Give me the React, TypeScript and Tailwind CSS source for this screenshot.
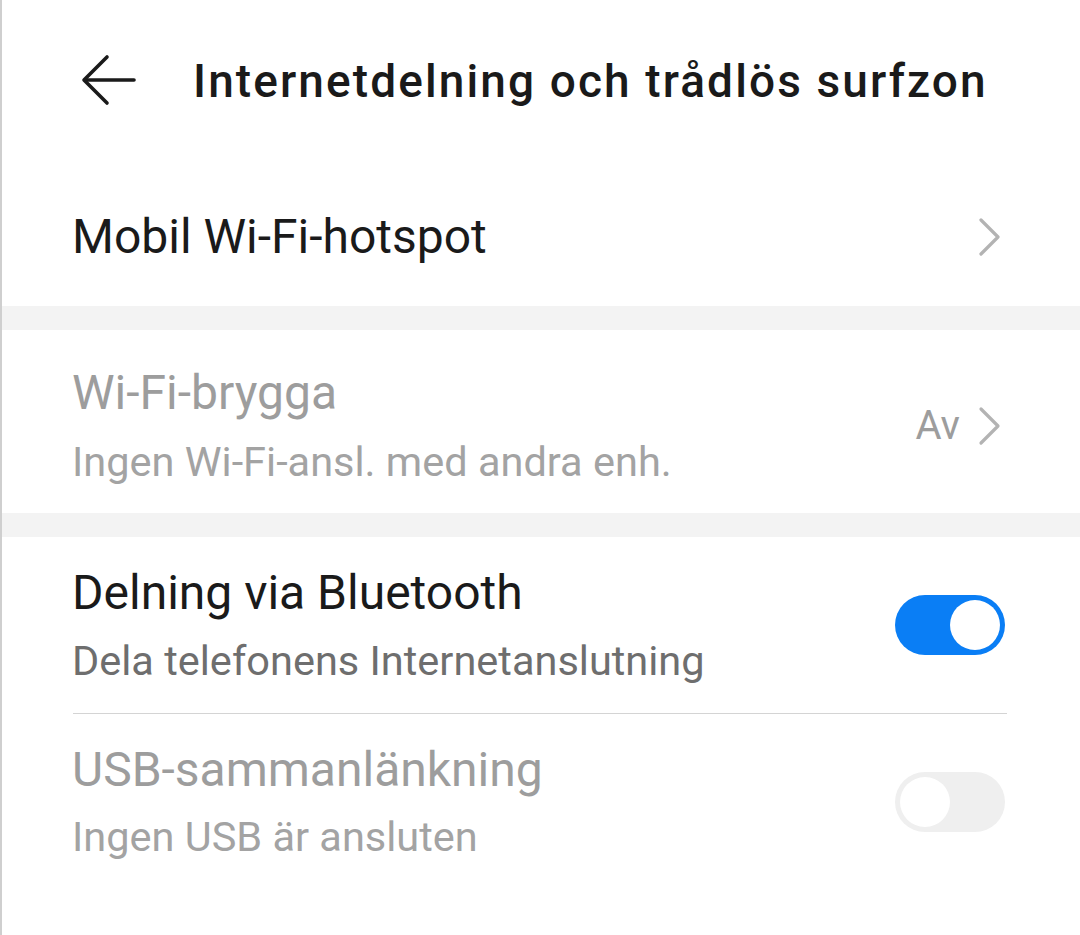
import React from "react";

function Chevron() {
  return (
    <svg width="24" height="40" viewBox="0 0 24 40" fill="none" className="shrink-0">
      <path d="M3 3 L20 20 L3 37" stroke="#b3b3b3" strokeWidth="3.2" strokeLinecap="round" strokeLinejoin="round" />
    </svg>
  );
}

function Toggle({ on }: { on: boolean }) {
  return (
    <div
      className={`w-[110px] h-[60px] rounded-full flex items-center px-[5px] shrink-0 ${
        on ? "bg-[#0a7ef5] justify-end" : "bg-[#efefef] justify-start"
      }`}
    >
      <div className="w-[50px] h-[50px] rounded-full bg-white" />
    </div>
  );
}

export default function App() {
  return (
    <div
      className="w-[1080px] h-[935px] bg-white border-l-2 border-[#cfcfcf] overflow-hidden"
      style={{ fontFamily: "Roboto, 'Noto Sans', sans-serif" }}
    >
      {/* header */}
      <div className="h-[162px] flex items-center pl-[78px]">
        <svg width="58" height="58" viewBox="0 0 58 58" fill="none">
          <path d="M54 28 H5" stroke="#1a1a1a" strokeWidth="3.6" strokeLinecap="round" />
          <path d="M27 5 L4 28 L27 51" stroke="#1a1a1a" strokeWidth="3.6" strokeLinecap="round" strokeLinejoin="round" />
        </svg>
        <h1 className="ml-[55px] text-[46px] font-medium text-[#1a1a1a] leading-none tracking-[2.1px] whitespace-nowrap">
          Internetdelning och trådlös surfzon
        </h1>
      </div>

      {/* Mobil Wi-Fi-hotspot */}
      <div className="h-[144px] flex items-center justify-between pt-[6px] pl-[70px] pr-[78px]">
        <span className="text-[48px] text-[#1a1a1a] leading-none">Mobil Wi-Fi-hotspot</span>
        <Chevron />
      </div>

      <div className="h-[24px] bg-[#f3f3f3]" />

      {/* Wi-Fi-brygga */}
      <div className="h-[183px] flex items-center justify-between pt-[8px] pl-[70px] pr-[78px]">
        <div className="flex flex-col">
          <span className="text-[48px] leading-[58px] text-[#9d9d9d]">Wi-Fi-brygga</span>
          <span className="mt-[14px] text-[41.5px] leading-[52px] text-[#a3a3a3]">Ingen Wi-Fi-ansl. med andra enh.</span>
        </div>
        <div className="flex items-center gap-[18px]">
          <span className="text-[40px] text-[#9d9d9d] leading-none">Av</span>
          <Chevron />
        </div>
      </div>

      <div className="h-[24px] bg-[#f3f3f3]" />

      {/* Bluetooth */}
      <div className="h-[176px] flex items-center justify-between pl-[70px] pr-[75px]">
        <div className="flex flex-col">
          <span className="text-[48px] leading-[58px] text-[#1a1a1a]">Delning via Bluetooth</span>
          <span className="mt-[13px] text-[41.5px] leading-[52px] text-[#6e6e6e]">Dela telefonens Internetanslutning</span>
        </div>
        <Toggle on />
      </div>

      <div className="ml-[71px] mr-[73px] h-px bg-[#d4d4d4]" />

      {/* USB */}
      <div className="h-[175px] flex items-center justify-between pl-[70px] pr-[75px]">
        <div className="flex flex-col">
          <span className="text-[48px] leading-[58px] text-[#9d9d9d]">USB-sammanlänkning</span>
          <span className="mt-[12px] text-[41.5px] leading-[52px] text-[#a3a3a3]">Ingen USB är ansluten</span>
        </div>
        <Toggle on={false} />
      </div>
    </div>
  );
}
